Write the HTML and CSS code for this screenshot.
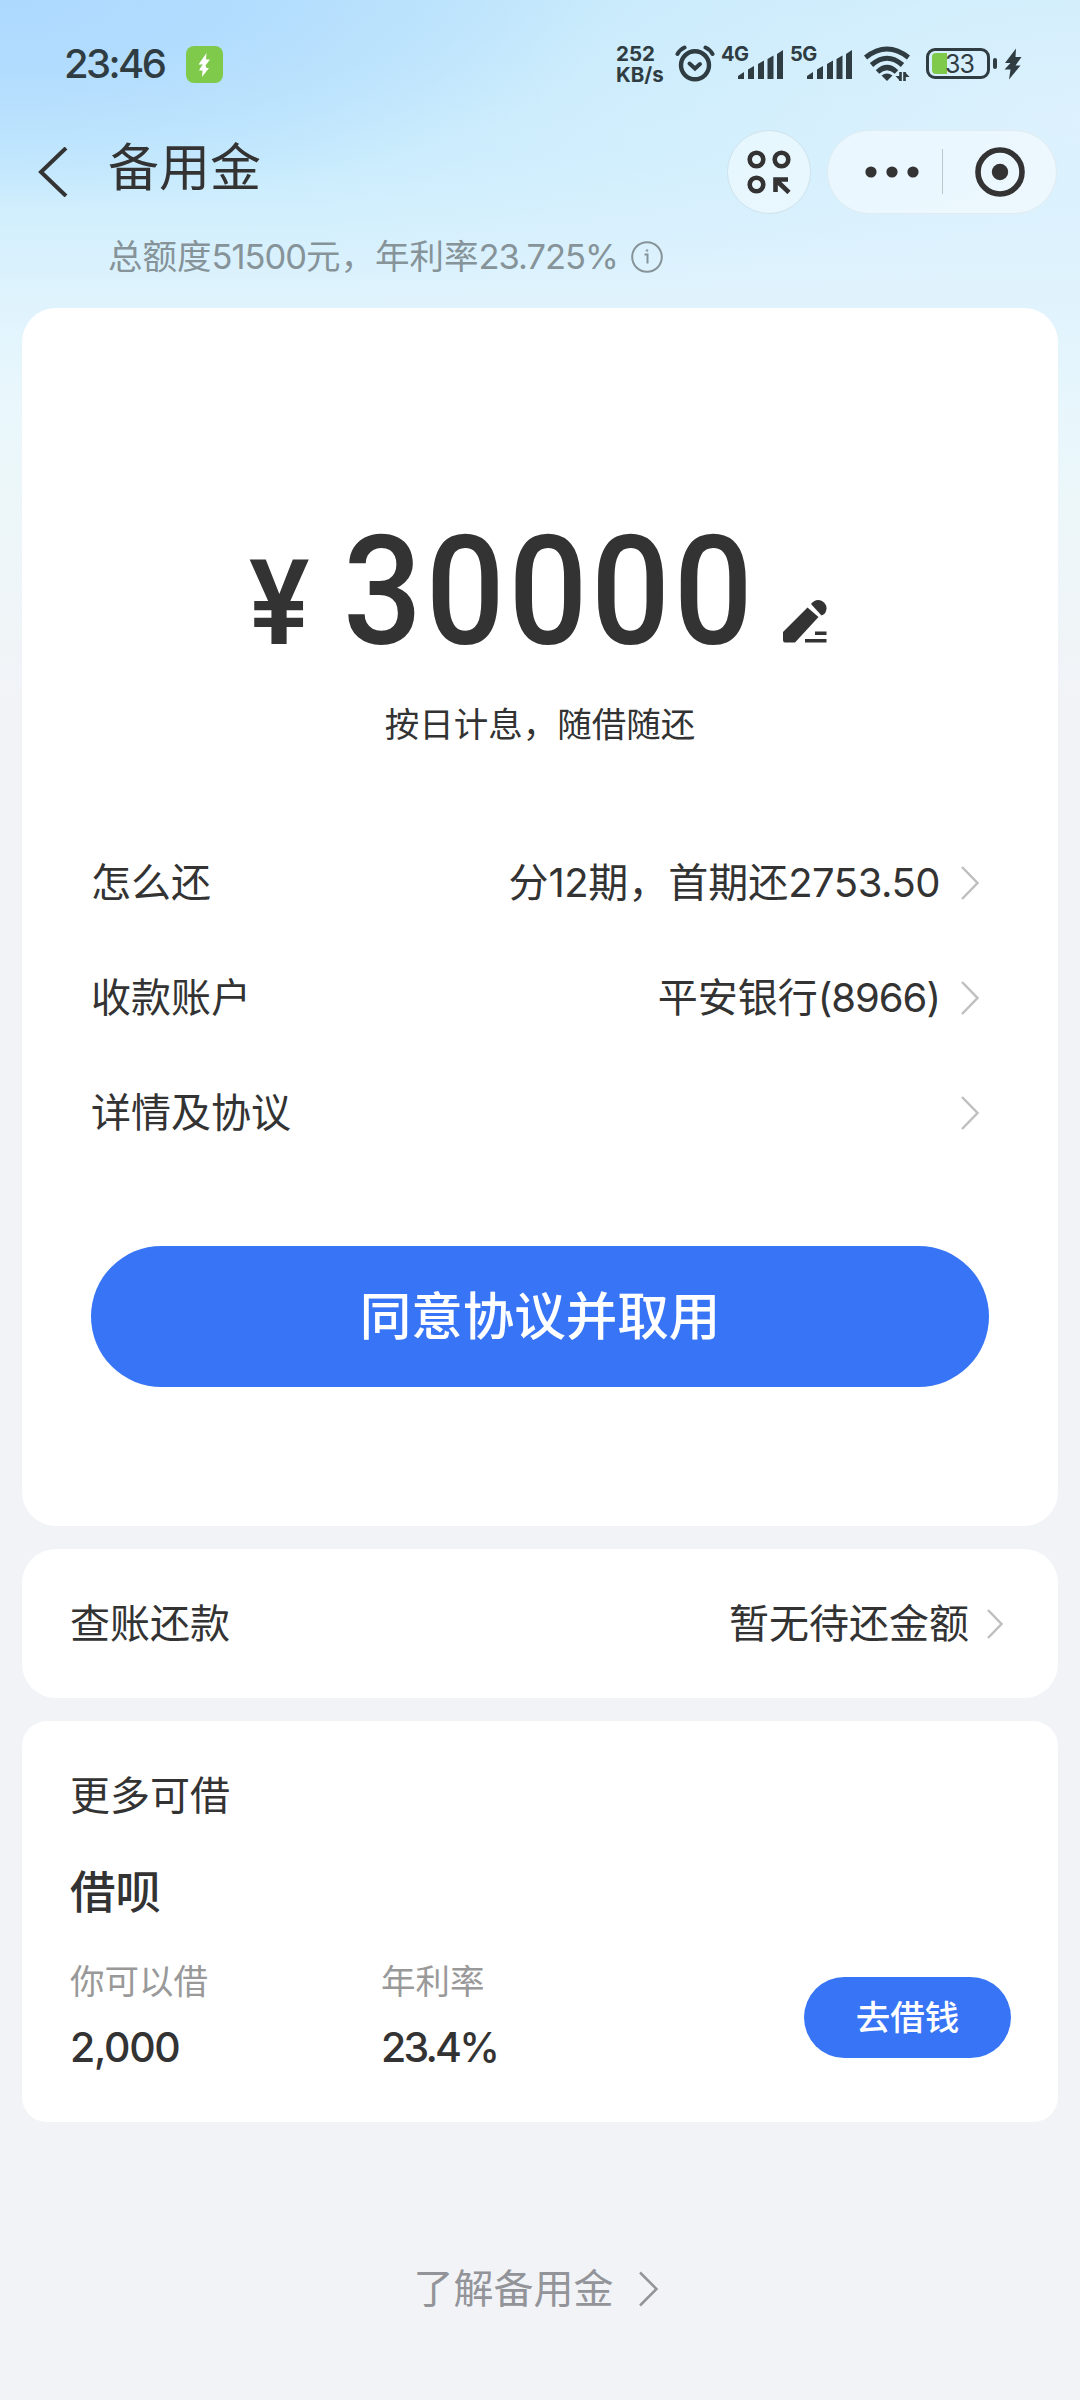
FILE: index.html
```html
<!DOCTYPE html>
<html lang="zh-CN">
<head>
<meta charset="utf-8">
<title>备用金</title>
<link rel="stylesheet" href="styles.css">
</head>
<body>
<div class="page">
  <div class="status">
    <span class="clock">23:46</span>
    <svg class="badge" width="37" height="37" viewBox="0 0 37 37"><rect width="37" height="37" rx="8" fill="#7fca4a"/><path d="M20.5 7 L12.5 18.5 H17 L15.5 20 L13 24.5 H16.5 L16 31 L23 22 H20.5 L19.5 19.5 L24 13.5 H20Z" fill="#fff"/></svg>
    <div class="speed"><span>252</span><span>KB/s</span></div>
    <svg class="alarm" width="40" height="40" viewBox="0 0 40 40" fill="none" stroke="#2f3c42" stroke-width="4.4" stroke-linecap="round"><circle cx="20" cy="22.3" r="14"/><path d="M14.5 20.5 L20 25.5 L25 21" stroke-width="4"/><path d="M2.5 11 Q5 6.500 9.500 4.500 M37.500 11 Q35 6.500 30.500 4.500" stroke-width="4"/></svg>
    <div class="signal"><span>4G</span><svg width="45" height="30" viewBox="0 0 45 30" fill="#2f3c42"><path d="M0 29V26L6 22V29ZM10 29V19.500L16 16V29ZM20 29V14L26 10.500V29ZM29.500 29V9L35.500 5.500V29ZM39 29V4L45 0V29Z"/></svg></div>
    <div class="signal second"><span>5G</span><svg width="45" height="30" viewBox="0 0 45 30" fill="#2f3c42"><path d="M0 29V26L6 22V29ZM10 29V19.500L16 16V29ZM20 29V14L26 10.500V29ZM29.500 29V9L35.500 5.500V29ZM39 29V4L45 0V29Z"/></svg></div>
    <svg class="wifi" width="46" height="36" viewBox="0 0 46 36" fill="none" stroke="#2f3c42" stroke-width="5"><path d="M1.500 11.500 Q23 -5.500 44.500 11.500"/><path d="M7.500 19 Q23 5.500 38.500 19"/><path d="M13.500 26 Q23 17 32.500 26"/><path d="M17.500 29.500 Q23 25.500 28.500 29.500 L23 35Z" fill="#2f3c42" stroke="none"/><path d="M36.500 26V35M40.500 35V26" stroke-width="2.600"/><path d="M31.500 30H36V35ZM41 26L45.500 31H41Z" fill="#2f3c42" stroke="none"/></svg>
    <div class="battery"><span class="level"></span><span class="pct">33</span></div>
    <span class="nub"></span>
    <svg class="bolt" width="18" height="32" viewBox="0 0 18 32" fill="#2f3c42"><path d="M12 0.500 L1 15 H6.500 L0.500 21.500 H6.500 L5 31.500 L16.500 17.500 H11.500 L17.500 9 H11.500Z"/></svg>
  </div>

  <header class="nav">
    <svg class="back" width="30" height="50" viewBox="0 0 30 50" fill="none" stroke="#333" stroke-width="4"><path d="M28 1 L3 25 L28 49"/></svg>
    <h1>备用金</h1>
    <div class="round-btn">
      <svg width="44" height="44" viewBox="0 0 44 44" fill="none" stroke="#333" stroke-width="4.600"><circle cx="9.500" cy="9.500" r="6.800"/><circle cx="34.500" cy="9.500" r="6.800"/><circle cx="9.500" cy="34.500" r="6.800"/><path d="M28.500 42V29.500H41M30 31L42 42.500"/></svg>
    </div>
    <div class="capsule">
      <svg width="54" height="12" viewBox="0 0 54 12" fill="#333"><circle cx="6" cy="6" r="5.600"/><circle cx="27" cy="6" r="5.600"/><circle cx="48" cy="6" r="5.600"/></svg>
      <span class="divider"></span>
      <svg width="50" height="50" viewBox="0 0 50 50"><circle cx="25" cy="25" r="22" fill="none" stroke="#333" stroke-width="5.600"/><circle cx="25" cy="25" r="8.200" fill="#333"/></svg>
    </div>
  </header>
  <div class="quota">
    <span>总额度<b class="num">51500</b>元，年利率<b class="num">23.725%</b></span>
    <svg width="32" height="32" viewBox="0 0 32 32" fill="none" stroke="#869399" stroke-width="2"><circle cx="16" cy="16" r="14.800"/><path d="M13.500 13.500H16.500V22.500"/><circle cx="16" cy="9.500" r="0.800" fill="#869399" stroke-width="1"/></svg>
  </div>

  <main class="card loan">
    <div class="amount">
      <span class="yen">¥</span><span class="figure">30000</span>
      <svg class="pencil" width="46" height="45" viewBox="0 0 46 45" fill="#333"><path d="M1 33L25.500 8.500L36.500 18L13 43.500H3Q1 43.500 1 41Z"/><path d="M29 5Q34 -1 40 2Q45 5 44.500 10Q44 15 39.500 16.500Z"/><path d="M33 32.500H44.500V36H33ZM23 40H44.500V43.500H23Z"/></svg>
    </div>
    <p class="hint">按日计息，随借随还</p>
    <div class="rows">
      <div class="row"><span>怎么还</span><span class="value">分<b class="num">12</b>期，首期还<b class="num">2753.50</b></span><svg class="chev" width="20" height="34" viewBox="0 0 20 34"><path d="M2 1L17.500 17L2 33"/></svg></div>
      <div class="row"><span>收款账户</span><span class="value">平安银行<b class="num account">(8966)</b></span><svg class="chev" width="20" height="34" viewBox="0 0 20 34"><path d="M2 1L17.500 17L2 33"/></svg></div>
      <div class="row"><span>详情及协议</span><span class="value"></span><svg class="chev" width="20" height="34" viewBox="0 0 20 34"><path d="M2 1L17.500 17L2 33"/></svg></div>
    </div>
    <button class="primary">同意协议并取用</button>
  </main>

  <section class="card bill"><span>查账还款</span><span class="value">暂无待还金额</span><svg class="chev" width="18" height="30" viewBox="0 0 18 30"><path d="M2 1L15.500 15L2 29"/></svg></section>

  <section class="card more">
    <h2>更多可借</h2>
    <h3>借呗</h3>
    <div class="offer">
      <div class="stat"><span class="label">你可以借</span><b class="num">2,000</b></div>
      <div class="stat"><span class="label">年利率</span><b class="num rate">23.4%</b></div>
      <button class="small">去借钱</button>
    </div>
  </section>

  <footer class="learn"><span>了解备用金</span><svg class="chev" width="21" height="36" viewBox="0 0 21 36"><path d="M2 1.500L18.500 18L2 34.500"/></svg></footer>
</div>
</body>
</html>
```
FILE: styles.css
```css
* { box-sizing: border-box; }
body, h1, h2, h3, p { margin: 0; font-weight: 400; }
body {
  background: #f1f3f7;
  color: #333;
  font-family: Inter, "Noto Sans CJK SC", sans-serif;
}
svg { display: block; flex: none; }
.page {
  width: 1080px;
  height: 2400px;
  overflow: hidden;
  background:
    radial-gradient(ellipse 620px 210px at 0 0, #aed9ff 0, #aed9ffcc 35%, #aed9ff00 100%),
    radial-gradient(ellipse 800px 420px at 1080px 120px, #e2f3fdcc 0, #e2f3fd00 100%),
    linear-gradient(180deg, #c0e8fb 0, #c9ecfd 160px, #dff3fd 300px, #e9f7fc 400px, #ecf7f9 480px, #f1f3f7 700px);
}
.num { font-weight: 400; letter-spacing: -0.5px; }

.status { display: flex; height: 128px; padding-left: 64px; align-items: flex-start; color: #2f3c42; }
.clock { width: 122px; margin-top: 40px; font-size: 40px; line-height: 48px; font-weight: 500; letter-spacing: -2.600px; }
.badge { margin-top: 46px; }
.speed { display: flex; flex-direction: column; width: 59px; margin: 43px 0 0 393px; font-size: 20.500px; line-height: 21px; font-weight: 700; }
.alarm { margin-top: 43px; }
.signal { display: flex; margin: 43px 0 0 6px; width: 62px; }
.signal.second { margin-left: 7px; }
.signal span { width: 17px; font-size: 20px; line-height: 22px; font-weight: 700; letter-spacing: -0.500px; white-space: nowrap; }
.signal svg { margin-top: 7px; }
.wifi { margin: 46px 0 0 12px; }
.battery { position: relative; width: 64px; height: 31px; margin: 48px 0 0 16px; border: 3px solid #2f3c42; border-radius: 9px; }
.level { position: absolute; left: 3px; top: 2px; width: 15px; height: 21px; border-radius: 4px 0 0 4px; background: #7fca4a; }
.pct { position: absolute; left: 3px; right: 0; top: 0; text-align: center; font-size: 25px; line-height: 26px; letter-spacing: -1px; }
.nub { width: 4px; height: 11px; margin: 58px 0 0 3px; border-radius: 2px; background: #2f3c42; }
.bolt { margin: 48px 0 0 7px; }

.nav { display: flex; align-items: center; height: 87px; padding-left: 38px; }
.back { margin-right: 40px; }
h1 { width: 619px; font-size: 51px; line-height: 70px; margin-top: -7px; }
.round-btn { display: flex; align-items: center; justify-content: center; width: 84px; height: 84px; margin-right: 16px; border: 1px solid #cfe3ed; border-radius: 50%; background: #f4fbff99; flex: none; }
.capsule { display: flex; align-items: center; width: 230px; height: 84px; padding-left: 37px; border: 1px solid #e0ecf1; border-radius: 42px; background: #f6fcff99; flex: none; }
.divider { width: 1px; height: 45px; margin: 0 32px 0 23px; background: #bcc7cc; }

.quota { display: flex; align-items: center; gap: 13px; height: 93px; padding: 0 0 10px 108px; font-size: 34.500px; line-height: 50px; color: #869399; white-space: nowrap; }
.quota .num { letter-spacing: -1px; }

.card { width: 1036px; margin: 0 auto 23px; border-radius: 34px; background: #fff; }
.loan { height: 1218px; padding: 206px 69px 0; }
.amount { display: flex; align-items: flex-end; height: 150px; margin-left: 158px; font-family: Roboto, sans-serif; }
.yen { width: 94px; margin-bottom: 1px; font-size: 118px; line-height: 118px; font-weight: 600; transform: scaleX(.96); transform-origin: 0 50%; }
.figure { width: 439px; margin-bottom: -3px; font-size: 152px; line-height: 150px; font-weight: 500; letter-spacing: 4px; transform: scaleX(.915); transform-origin: 0 50%; }
.pencil { margin-bottom: 20px; }
.hint { margin-top: 36px; font-size: 34.500px; line-height: 50px; text-align: center; }
.rows { margin-top: 75px; }
.row { display: flex; align-items: center; height: 115px; font-size: 40px; padding-right: 9px; white-space: nowrap; }
.row > span { padding-bottom: 6px; }
.value { flex: 1; text-align: right; margin-right: 20px; }
.account { letter-spacing: -1px; }
.chev { fill: none; stroke: #bfbfbf; stroke-width: 2.500; }
button { display: block; border: 0; color: #fff; background: #3875f6; font-family: inherit; font-weight: 500; }
.primary { width: 898px; height: 141px; margin-top: 76px; padding: 0 0 8px; border-radius: 71px; font-size: 51.500px; }
.bill { display: flex; align-items: center; height: 149px; padding: 0 54px 0 48px; font-size: 40px; }
.bill > span { padding-bottom: 6px; }
.bill .value { margin-right: 17px; }
.more { height: 401px; padding: 45px 47px 0 48px; border-radius: 25px; }
h2 { font-size: 40px; line-height: 60px; }
h3 { margin-top: 35px; font-size: 45.500px; line-height: 64px; font-weight: 500; }
.offer { display: flex; margin-top: 32px; }
.stat { width: 311px; display: flex; flex-direction: column; }
.label { font-size: 34.500px; line-height: 50px; color: #999; }
.stat .num { margin-top: 15px; font-size: 41px; line-height: 50px; font-weight: 500; letter-spacing: -1.300px; }
.stat .rate { letter-spacing: -2.800px; }
.small { width: 207px; height: 81px; margin: 20px 0 0 112px; padding: 0 0 6px; border-radius: 41px; font-size: 34.500px; flex: none; }
.learn { display: flex; align-items: center; justify-content: center; gap: 24px; margin-top: 137px; padding-right: 8px; font-size: 40px; line-height: 60px; color: #939499; }
.learn .chev { stroke: #939499; }
```
